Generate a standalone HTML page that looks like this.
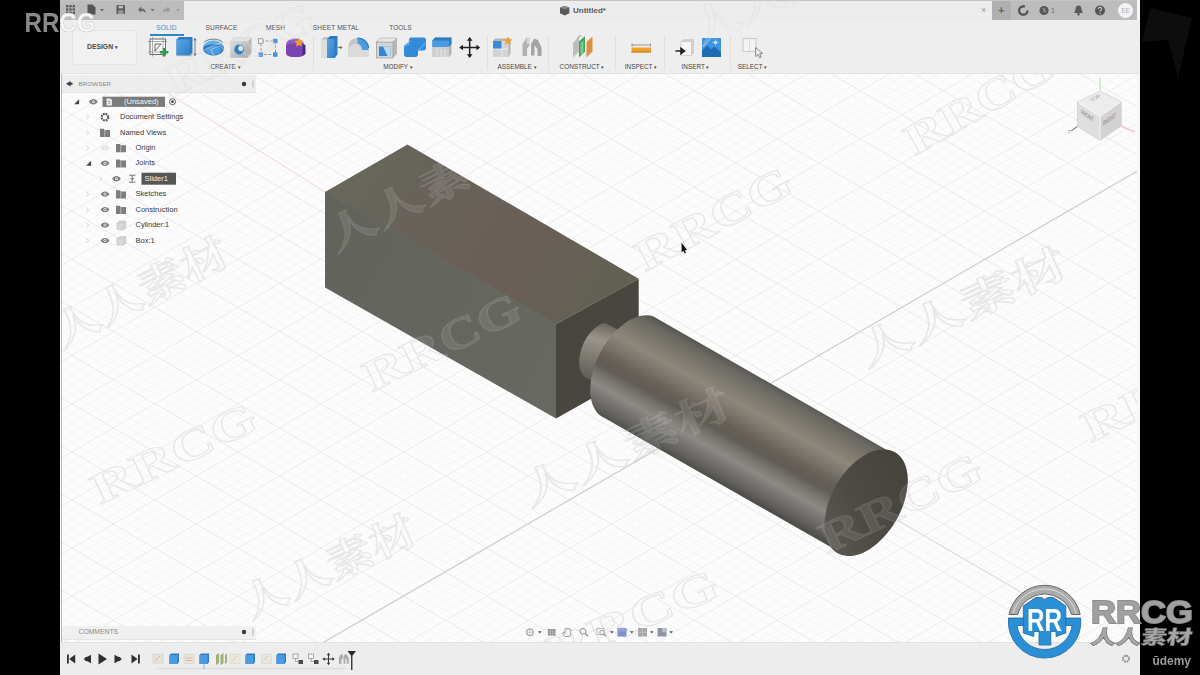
<!DOCTYPE html>
<html lang="en">
<head>
<meta charset="utf-8">
<title>Untitled* - Fusion 360</title>
<style>
html,body{margin:0;padding:0;}
body{width:1200px;height:675px;overflow:hidden;background:#000;position:relative;
  font-family:"Liberation Sans","Noto Sans CJK SC",sans-serif;color:#333;}
.abs{position:absolute;}
#app{position:absolute;left:60px;top:0;width:1080px;height:675px;background:#fbfbfb;overflow:hidden;}
#canvas{position:absolute;left:0;top:0;width:1200px;height:675px;}
/* top bar */
#topbar{position:absolute;left:60px;top:0;width:1080px;height:20px;background:#ececec;}
#topbar .g1{position:absolute;left:0;top:0;width:124px;height:20px;background:#bcbcbc;}
#topbar .g2{position:absolute;left:932px;top:0;width:148px;height:20px;background:#bcbcbc;}
#toolbar{position:absolute;left:60px;top:20px;width:1080px;height:53px;background:#eeeeee;border-bottom:1px solid #e2e2e2;}
.tab{position:absolute;top:24px;font-size:6.6px;letter-spacing:0.1px;color:#555;white-space:nowrap;transform:translateX(-50%);}
.lbl{position:absolute;top:63px;font-size:6.4px;color:#444;white-space:nowrap;transform:translateX(-50%);}
.tiny{font-size:6.6px;white-space:nowrap;color:#444;}
.row{position:absolute;font-size:7.5px;color:#3a3a3a;white-space:nowrap;line-height:10px;}
</style>
</head>
<body>
<div id="app"></div>

<!-- CANVAS -->
<svg id="canvas" width="1200" height="675" viewBox="0 0 1200 675">
  <defs>
    <pattern id="gmin" width="8.3" height="8.3" patternUnits="userSpaceOnUse" patternTransform="matrix(1 0.58 1 -0.58 569 500)">
      <path d="M0 0H8.3M0 0V8.3" stroke="#f0f0f0" stroke-width="0.9" fill="none"/>
    </pattern>
    <pattern id="gmaj" width="41.5" height="41.5" patternUnits="userSpaceOnUse" patternTransform="matrix(1 0.58 1 -0.58 569 500)">
      <path d="M0 0H41.5M0 0V41.5" stroke="#e7e7e7" stroke-width="1.1" fill="none"/>
    </pattern>
    <linearGradient id="cyl" gradientUnits="userSpaceOnUse" x1="770" y1="383" x2="716" y2="480">
      <stop offset="0" stop-color="#5a5852"/>
      <stop offset="0.06" stop-color="#6a6862"/>
      <stop offset="0.16" stop-color="#7a766c"/>
      <stop offset="0.3" stop-color="#8e887b"/>
      <stop offset="0.42" stop-color="#78736a"/>
      <stop offset="0.52" stop-color="#645f57"/>
      <stop offset="0.6" stop-color="#615d56"/>
      <stop offset="0.68" stop-color="#77756f"/>
      <stop offset="0.77" stop-color="#8c8a85"/>
      <stop offset="0.87" stop-color="#72716d"/>
      <stop offset="0.95" stop-color="#605f5b"/>
      <stop offset="1" stop-color="#504e4a"/>
    </linearGradient>
    <linearGradient id="cap" gradientUnits="userSpaceOnUse" x1="895" y1="460" x2="835" y2="545">
      <stop offset="0" stop-color="#46423c"/><stop offset="0.6" stop-color="#4e4a45"/><stop offset="1" stop-color="#5b5853"/>
    </linearGradient>
    <linearGradient id="neck" gradientUnits="userSpaceOnUse" x1="605" y1="323" x2="590" y2="380">
      <stop offset="0" stop-color="#6a665e"/>
      <stop offset="0.3" stop-color="#9a968d"/>
      <stop offset="0.6" stop-color="#7f7b73"/>
      <stop offset="1" stop-color="#5f5c55"/>
    </linearGradient>
    <linearGradient id="topf" gradientUnits="userSpaceOnUse" x1="366" y1="168" x2="597" y2="301">
      <stop offset="0" stop-color="#67675b"/>
      <stop offset="0.25" stop-color="#67625a"/>
      <stop offset="0.55" stop-color="#695f59"/>
      <stop offset="0.8" stop-color="#676056"/>
      <stop offset="1" stop-color="#626053"/>
    </linearGradient>
    <linearGradient id="leftf" gradientUnits="userSpaceOnUse" x1="325" y1="240" x2="556" y2="370">
      <stop offset="0" stop-color="#63635d"/>
      <stop offset="1" stop-color="#676861"/>
    </linearGradient>
  </defs>
  <rect x="60" y="73" width="1080" height="570" fill="#fcfcfc"/>
  <rect x="60" y="73" width="1080" height="570" fill="url(#gmin)"/>
  <rect x="60" y="73" width="1080" height="570" fill="url(#gmaj)"/>
  <!-- faint canvas watermarks -->
  <clipPath id="cpCanvas"><rect x="60" y="73" width="1080" height="570"/></clipPath>
  <g clip-path="url(#cpCanvas)" fill="none" stroke="#e6e6e6" stroke-width="1.1" font-family="'Liberation Serif','Noto Serif CJK SC',serif" font-weight="700">
    <text transform="translate(100 505) rotate(-25.7)" font-size="44" textLength="178" lengthAdjust="spacingAndGlyphs">RRCG</text>
    <text transform="translate(372 392) rotate(-25.8)" font-size="44" textLength="170" lengthAdjust="spacingAndGlyphs">RRCG</text>
    <text transform="translate(645 272) rotate(-28.2)" font-size="44" textLength="171" lengthAdjust="spacingAndGlyphs">RRCG</text>
    <text transform="translate(915 156) rotate(-29.5)" font-size="44" textLength="164" lengthAdjust="spacingAndGlyphs">RRCG</text>
    <text transform="translate(828 554) rotate(-25.7)" font-size="44" textLength="175" lengthAdjust="spacingAndGlyphs">RRCG</text>
    <text transform="translate(1091 443) rotate(-25.8)" font-size="44" textLength="177" lengthAdjust="spacingAndGlyphs">RRCG</text>
    <text transform="translate(555 668) rotate(-23.6)" font-size="44" textLength="182" lengthAdjust="spacingAndGlyphs">RRCG</text>
    <text transform="translate(62 347) rotate(-26.6)" font-size="40" textLength="190" lengthAdjust="spacingAndGlyphs">人人素材</text>
    <text transform="translate(250 619) rotate(-24.9)" font-size="40" textLength="187" lengthAdjust="spacingAndGlyphs">人人素材</text>
    <text transform="translate(529 507) rotate(-24.4)" font-size="40" textLength="225" lengthAdjust="spacingAndGlyphs">人人素材</text>
    <text transform="translate(866 367) rotate(-24.7)" font-size="40" textLength="225" lengthAdjust="spacingAndGlyphs">人人素材</text>
  </g>
  <!-- axis lines -->
  <line x1="60" y1="794.8" x2="1140" y2="169.5" stroke="#cfcfcf" stroke-width="1.2"/>

  <!-- viewcube -->
  <g id="viewcube">
    <path d="M1100 78v12" stroke="#bfe5bf" stroke-width="1.400"/>
    <path d="M1121 126l14 6" stroke="#f5c6cc" stroke-width="1.400"/>
    <path d="M1078 126l-7 5" stroke="#8a8a9a" stroke-width="1.200"/>
    <path d="M1100 140.500l-22.500-14 0-24.500 22.500 14.500z" fill="#dedede"/>
    <path d="M1100 140.500l21-14.500v-24.500l-21 15z" fill="#d2d2d2"/>
    <path d="M1100 91l21.500 10.500-21.500 15-22.500-14.500z" fill="#ececec"/>
    <path d="M1077.500 102l22.500 14.500 21.500-15M1100 116.500v24" stroke="#f6f6f6" stroke-width="1" fill="none"/>
    <path d="M1100 91l21.500 10.500v24.500l-21.500 14.500-22.500-14-0-24.500z" fill="none" stroke="#cfcfcf" stroke-width=".7"/>
    <text transform="matrix(.8 .5 0 1 1081 114)" font-size="7" font-weight="700" fill="#9c9c9c" font-family="'Liberation Sans',sans-serif" textLength="16" lengthAdjust="spacingAndGlyphs">FRONT</text>
    <text transform="matrix(.8 -.55 0 1 1103 126)" font-size="7" font-weight="700" fill="#989898" font-family="'Liberation Sans',sans-serif" textLength="16" lengthAdjust="spacingAndGlyphs">RIGHT</text>
    <text transform="matrix(.8 -.5 .8 .5 1092 102)" font-size="6" font-weight="700" fill="#b5b5b5" font-family="'Liberation Sans',sans-serif">TOP</text>
    <text x="1068" y="133" font-size="5" fill="#8a8a9a" font-family="'Liberation Sans',sans-serif">z</text>
  </g>
  <line x1="61.500" y1="73" x2="61.500" y2="642" stroke="#b9b9b9" stroke-width="1"/>
  <line x1="330" y1="195" x2="150" y2="82" stroke="#f3dada" stroke-width="1.1"/>
  <line x1="885" y1="513" x2="1045" y2="606" stroke="#d9d9d9" stroke-width="1.1"/>
  <!-- cursor -->
  <path d="M681.500 242.500l5.500 7.500-2.300.2 1.300 2.800-1.300.6-1.300-2.800-1.700 1.500z" fill="#111"/>
  <!-- MODEL -->
  <g id="model">
    <!-- box -->
    <polygon points="407.5,144.5 638.7,278.7 556,324 325,192" fill="url(#topf)"/>
    <polygon points="325,192 556,324 556,418.5 325,287.5" fill="url(#leftf)"/>
    <polygon points="556,324 638.7,278.7 638.7,372 556,418.5" fill="#49453f"/>
    <polyline points="325,192 556,324" fill="none" stroke="#4a4842" stroke-width="0.7" opacity=".7"/>
    
    <!-- neck -->
    <path d="M605,323 L640,341 L628,397 L593,379 A16.5,28.5 24 0 1 605,323 Z" fill="url(#neck)"/>
    <!-- cylinder body -->
    <path d="M653.5,316.5 L886,449.5 A34.7,58 29.5 0 1 846.5,556 L605.5,418.5 A30,51.5 28 0 1 653.5,316.5 Z" fill="url(#cyl)"/>
    <!-- end cap -->
    <ellipse cx="866" cy="502.7" rx="34.7" ry="58" transform="rotate(29.5 866 502.7)" fill="url(#cap)"/>
  </g>
  <!-- watermark traces over model -->
  <clipPath id="cpModel"><polygon points="407.5,144.5 638.7,278.7 638.7,372 556,418.5 325,287.5 325,192"/><path d="M653.5,316.5 L886,449.5 A34.7,58 29.5 0 1 846.5,556 L605.5,418.5 A30,51.5 28 0 1 653.5,316.5 Z"/></clipPath>
  <g clip-path="url(#cpModel)" fill="rgba(255,255,255,.09)" stroke="rgba(255,255,255,.1)" stroke-width="1.2" font-family="'Liberation Serif','Noto Serif CJK SC',serif" font-weight="700">
    <text transform="translate(372 392) rotate(-25.8)" font-size="44" textLength="170" lengthAdjust="spacingAndGlyphs">RRCG</text>
    <text transform="translate(828 554) rotate(-25.7)" font-size="44" textLength="175" lengthAdjust="spacingAndGlyphs">RRCG</text>
    <text transform="translate(529 507) rotate(-24.4)" font-size="40" textLength="225" lengthAdjust="spacingAndGlyphs">人人素材</text>
    <text transform="translate(335 252) rotate(-26.4)" font-size="40" textLength="207" lengthAdjust="spacingAndGlyphs">人人素材</text>
  </g>

</svg>


<!-- TOP BAR -->
<div class="abs" style="left:1137px;top:0;width:3px;height:675px;background:#f7f7f7;"></div>
<div id="topbar">
  <div class="g1"></div><div class="g2"></div>
  <div class="abs" style="left:932px;top:0;width:19px;height:20px;background:#b0b0b0;"></div>
  <div class="abs" style="left:0;top:0;width:1080px;height:1px;background:#c4c4c4;"></div>
  <div class="abs" style="left:1077px;top:0;width:3px;height:20px;background:#f4f4f4;"></div>
  <div class="abs" style="left:513px;top:6px;font-size:8px;font-weight:700;color:#5a5a5a;line-height:10px;white-space:nowrap;">Untitled*</div>
  <div class="abs" style="left:921px;top:5px;font-size:9px;color:#9a9a9a;line-height:10px;">×</div>
  <div class="abs" style="left:938px;top:4px;font-size:11px;color:#666;line-height:12px;font-weight:700;">+</div>
  <div class="abs" style="left:991px;top:6px;font-size:7px;color:#666;line-height:9px;">1</div>
  <div class="abs" style="left:1058px;top:3px;width:15px;height:15px;border-radius:50%;background:#f3f3f3;font-size:6.5px;line-height:15px;text-align:center;color:#aaa;">EE</div>
</div>
<svg class="abs" style="left:0;top:0;" width="1200" height="20" viewBox="0 0 1200 20">
  <!-- grid icon -->
  <g fill="#5c5c5c">
    <rect x="66" y="5" width="2.4" height="2.4"/><rect x="69.3" y="5" width="2.4" height="2.4"/><rect x="72.6" y="5" width="2.4" height="2.4"/>
    <rect x="66" y="8.3" width="2.4" height="2.4"/><rect x="69.3" y="8.3" width="2.4" height="2.4"/><rect x="72.6" y="8.3" width="2.4" height="2.4"/>
    <rect x="66" y="11.6" width="2.4" height="2.4"/><rect x="69.3" y="11.6" width="2.4" height="2.4"/><rect x="72.6" y="11.6" width="2.4" height="2.4"/>
  </g>
  <!-- file icon -->
  <path d="M87.5 4.5h5l3 3v7h-8z" fill="#555"/>
  <path d="M100 9h4l-2 2.5z" fill="#666"/>
  <!-- save icon -->
  <rect x="116.5" y="5" width="8.5" height="9" rx="1" fill="#5a5a5a"/>
  <rect x="118.5" y="5.8" width="4.5" height="2.6" fill="#bcbcbc"/><rect x="118.3" y="10.3" width="5" height="3.7" fill="#9a9a9a"/>
  <!-- undo -->
  <path d="M138 9.5l3.2-3v2c3 0 4.6 1.8 4.8 4.8-1-1.7-2.4-2.3-4.8-2.3v2z" fill="#6a6a6a"/>
  <path d="M150.5 9h4l-2 2.5z" fill="#777"/>
  <!-- redo -->
  <path d="M170.5 9.5l-3.2-3v2c-3 0-4.6 1.8-4.8 4.8 1-1.7 2.4-2.3 4.8-2.3v2z" fill="#9a9a9a"/>
  <path d="M176 9h4l-2 2.5z" fill="#999"/>
  <!-- title cube -->
  <path d="M560 7.5l4.7-1.5 4.7 1.5v5.8l-4.7 2.2-4.7-2.2z" fill="#5a5a5a"/>
  <path d="M560 7.5l4.7 1.7 4.7-1.7-4.7-1.5z" fill="#8a8a8a"/>
  <!-- refresh -->
  <circle cx="1023.3" cy="10.5" r="4.2" fill="none" stroke="#4e4e4e" stroke-width="2.2" stroke-dasharray="21 5.4"/>
  <!-- clock -->
  <circle cx="1044" cy="10.5" r="4.6" fill="#5a5a5a"/>
  <path d="M1044 8v2.8l2 1" stroke="#bcbcbc" stroke-width="1" fill="none"/>
  <!-- bell -->
  <path d="M1078.5 5.5c2.2 0 3 2 3 4l1.3 3.5h-8.6l1.3-3.5c0-2 .8-4 3-4z" fill="#5a5a5a"/><circle cx="1078.5" cy="14.3" r="1.2" fill="#5a5a5a"/>
  <!-- help -->
  <circle cx="1100" cy="10.5" r="5" fill="#555"/>
  <path d="M1098.3 9c0-2.2 3.4-2.2 3.4 0 0 1.2-1.7 1.3-1.7 2.8" stroke="#c8c8c8" stroke-width="1.1" fill="none"/><circle cx="1100" cy="13.4" r=".7" fill="#c8c8c8"/>
</svg>

<!-- TOOLBAR -->
<div id="toolbar">
  <div class="abs" style="left:12px;top:10px;width:63px;height:33px;background:#f1f1f1;border:1px solid #e6e6e6;border-radius:2px;"></div>
  <div class="abs" style="left:27px;top:22px;font-size:6.8px;font-weight:700;color:#4a4a4a;line-height:9px;white-space:nowrap;">DESIGN <span style="font-size:5px;">▾</span></div>
  <div class="abs" style="left:90px;top:13.5px;width:34px;height:2px;background:#2f86c6;"></div>
</div>
<div class="tab" style="left:166.5px;color:#3a8ecb;">SOLID</div>
<div class="tab" style="left:221.5px;">SURFACE</div>
<div class="tab" style="left:275.5px;">MESH</div>
<div class="tab" style="left:336px;">SHEET METAL</div>
<div class="tab" style="left:400.5px;">TOOLS</div>
<div class="lbl" style="left:225.5px;">CREATE <span style="font-size:4.5px;">▾</span></div>
<div class="lbl" style="left:398px;">MODIFY <span style="font-size:4.5px;">▾</span></div>
<div class="lbl" style="left:517px;">ASSEMBLE <span style="font-size:4.5px;">▾</span></div>
<div class="lbl" style="left:582px;">CONSTRUCT <span style="font-size:4.5px;">▾</span></div>
<div class="lbl" style="left:641px;">INSPECT <span style="font-size:4.5px;">▾</span></div>
<div class="lbl" style="left:695.5px;">INSERT <span style="font-size:4.5px;">▾</span></div>
<div class="lbl" style="left:752.5px;">SELECT <span style="font-size:4.5px;">▾</span></div>


<svg class="abs" style="left:0;top:20px;" width="1200" height="55" viewBox="0 20 1200 55">
  <defs>
    <linearGradient id="bl" x1="0" y1="0" x2="1" y2="1"><stop offset="0" stop-color="#5aa8e6"/><stop offset="1" stop-color="#2f7fc8"/></linearGradient>
    <linearGradient id="gr" x1="0" y1="0" x2="1" y2="1"><stop offset="0" stop-color="#dcdcdc"/><stop offset="1" stop-color="#a9a9a9"/></linearGradient>
  </defs>
  <!-- dividers -->
  <g stroke="#e0e0e0" stroke-width="1">
    <line x1="313.5" y1="36" x2="313.5" y2="70"/><line x1="487.5" y1="36" x2="487.5" y2="70"/><line x1="548.5" y1="36" x2="548.5" y2="70"/>
    <line x1="615.5" y1="36" x2="615.5" y2="70"/><line x1="664.5" y1="36" x2="664.5" y2="70"/><line x1="730.5" y1="36" x2="730.5" y2="70"/>
  </g>
  <!-- 1 create sketch -->
  <rect x="150" y="39" width="15.5" height="15.5" fill="#f8f8f8" stroke="#6a6a6a" stroke-width="1"/>
  <path d="M148 41.5h19M148 52h19M152.5 37v19.5M163 37v19.5" stroke="#8a8a8a" stroke-width=".7"/>
  <path d="M155 51v-7h6z" fill="none" stroke="#555" stroke-width=".9"/>
  <path d="M160 52.2h8.4M164.2 48v8.4" stroke="#2c9a4b" stroke-width="2.6"/>
  <!-- 2 box -->
  <path d="M176.5 39.5l2.5-2.5h13.5v15.5l-2.5 3h-13.5z" fill="#2e7bc2"/>
  <rect x="176.500" y="39.500" width="13.5" height="16" fill="url(#bl)"/>
  <path d="M176.5 55.500h13.5l2.5-3v3.800h-16z" fill="#b9b9b9"/>
  <path d="M195 38.500v17M193.700 40.500l1.300-2 1.300 2M193.700 53.500l1.300 2 1.300-2" stroke="#555" stroke-width=".8" fill="none"/>
  <!-- 3 dish -->
  <ellipse cx="213.500" cy="48.500" rx="10.500" ry="7.200" fill="#2c78be"/>
  <path d="M203 48c1-10 20-10 21 0-3-5-18-5-21 0z" fill="#62b0ea"/>
  <ellipse cx="213.500" cy="50.500" rx="8" ry="4.200" fill="#4a9be0"/>
  <path d="M204 42.500c4-4.500 15-4.500 19 0" stroke="#555" stroke-width=".8" fill="none"/>
  <!-- 4 hole cube -->
  <path d="M230.500 41.500l3.500-4h17.500v15.500l-3.500 4.500h-17.500z" fill="#b5b5b5"/>
  <rect x="230.500" y="41.500" width="17.500" height="16" fill="url(#gr)"/>
  <path d="M230.500 41.500l3.500-4h17.500l-3.500 4z" fill="#e3e3e3"/>
  <circle cx="239.300" cy="49.500" r="5" fill="#2f7fc8"/><circle cx="240.800" cy="48.300" r="2.600" fill="#d5e7f7"/>
  <!-- 5 pattern -->
  <rect x="261" y="41" width="14.500" height="13.500" fill="none" stroke="#8a8a8a" stroke-width=".9" stroke-dasharray="3 1.600"/>
  <rect x="258.500" y="38.800" width="4.500" height="4.500" fill="#f4f4f4" stroke="#8a8a8a" stroke-width=".8"/>
  <rect x="273" y="38.800" width="4.500" height="4.500" fill="#4a8fd8"/>
  <rect x="258.500" y="52.300" width="4.500" height="4.500" fill="#4a8fd8"/>
  <rect x="273" y="52.300" width="4.500" height="4.500" fill="#4a8fd8"/>
  <!-- 6 purple form -->
  <path d="M286 45c0-4 4-6.500 8.500-6.500s8.500 2 9.500 5.500l1 8.500c0 3-3 4.500-9.500 4.500s-9.500-1.500-9.500-4.500z" fill="#8f59c4"/>
  <path d="M286 46c3-3 14-3 18.500-1l.5 7.500c0 3-3 4.500-9.500 4.500s-9.500-1.500-9.500-4.500z" fill="#7a45b2"/>
  <path d="M299 37.500l1.500 3 3.300.400-2.400 2.300.6 3.300-3-1.600-3 1.600.6-3.300-2.400-2.300 3.300-.400z" fill="#f0a030"/>
  <path d="M302.500 44l3 1v9l-3 1.500z" fill="#4a2a80"/>
  <!-- 7 press pull -->
  <path d="M321 39.500l3-2.500h6v18l-3 3h-6z" fill="#c2c2c2"/>
  <rect x="321" y="39.500" width="6" height="18.500" fill="#dedede"/>
  <path d="M327 39l3-3h7.500v18.500l-3 3.500h-7.500z" fill="#2e7bc2"/>
  <rect x="327" y="39" width="7.500" height="19" fill="url(#bl)"/>
  <path d="M338 47.500h3.500M340.300 46l1.500 1.500-1.500 1.500" stroke="#444" stroke-width=".8" fill="none"/>
  <!-- 8 fillet -->
  <path d="M348.500 57v-11c0-5 4.500-8 9-8 6 0 11 4.500 11 10v9z" fill="#c4c4c4"/>
  <path d="M348.500 57v-9c2-3 5-4.500 9-4.500l4.500 5.500h6.500v8z" fill="#dadada"/>
  <path d="M357.500 38c6 0 11 4.500 11 10v2h-6.500c0-4-2-6-4.500-6.500z" fill="#4a9be0"/>
  <path d="M357.500 38c6 0 11 4.500 11 10" stroke="#2e7bc2" stroke-width="1.200" fill="none"/>
  <!-- 9 shell -->
  <path d="M376.500 42l4-4h16.500v15.500l-4 4.500h-16.500z" fill="#b7b7b7"/>
  <rect x="376.500" y="42" width="16.500" height="16" fill="#d5d5d5" stroke="#9a9a9a" stroke-width=".7"/>
  <path d="M376.500 42l4-4h16.500l-4 4z" fill="#e6e6e6" stroke="#9a9a9a" stroke-width=".5"/>
  <rect x="379" y="46.500" width="11.500" height="9.500" fill="#3586d2"/>
  <path d="M383 46.500h7.500v9.500h-3z" fill="#bcd9f2"/>
  <!-- 10 combine -->
  <path d="M411 37.500h12.500c1.500 0 2.500 1 2.500 2.500v8c0 1.500-1 2.500-2.500 2.500h-5.500v4c0 1.500-1 2.500-2.500 2.500h-9c-1.500 0-2.500-1-2.500-2.500v-7.500c0-1.500 1-2.500 2.500-2.500h2.500v-4.500c0-1.500 1-2.500 2-2.500z" fill="#338ad8"/>
  <path d="M404 47l7-6.500M418 50.500l8-8" stroke="#5aa8e6" stroke-width="1.500"/>
  <!-- 11 offset face -->
  <path d="M432.500 40.500l2.500-3h16.500v16.500l-2.500 3h-16.500z" fill="#b5b5b5"/>
  <rect x="432.500" y="47" width="16.500" height="10" fill="#cfcfcf"/>
  <path d="M432.500 40.500l2.500-3h16.500v6.500l-2.500 3h-16.500z" fill="#2e7bc2"/>
  <rect x="432.500" y="40.500" width="16.500" height="6.500" fill="#4a9be0"/>
  <path d="M437 49v8M441 49v8M445 49v8" stroke="#e8e8e8" stroke-width="1"/>
  <!-- 12 move -->
  <path d="M469.700 38.500v18M460.700 47.500h18" stroke="#222" stroke-width="1.500"/>
  <path d="M469.700 37l2.800 3.800h-5.600zM469.700 58l2.800-3.800h-5.600zM459.200 47.500l3.800-2.800v5.600zM480.200 47.500l-3.800-2.800v5.600z" fill="#222"/>
  <!-- 13 new component -->
  <path d="M493 41l2-2.500h15.500v15l-2 3.500h-15.500z" fill="#b5b5b5"/>
  <rect x="493" y="41" width="15.500" height="16" fill="#d2d2d2"/>
  <rect x="493" y="41" width="9" height="8" fill="#3a8bd6"/>
  <path d="M493 49h15.500M502 41v16" stroke="#f2f2f2" stroke-width=".8"/>
  <path d="M508 36.500l1.300 2.700 3 .4-2.200 2 .6 3-2.700-1.500-2.700 1.500.6-3-2.200-2 3-.4z" fill="#f0a030"/>
  <!-- 14 joint -->
  <path d="M522.500 56v-12l4-6.500 3.500 1v6l-3 4.500v7z" fill="#b2b2b2"/>
  <path d="M531 44.500l3-6 4 1.500 3.500 7.500v8.500h-4v-7l-3-3.500v10h-3.500z" fill="#a4a4a4"/>
  <path d="M526.500 37.500l3.500 1v6l-3.500-1z" fill="#d6d6d6"/>
  <!-- 15 construct -->
  <path d="M573 43l6-6.500v15l-6 6z" fill="#bdbdbd"/>
  <path d="M579 41.500l6-5.500v15.500l-6 6z" fill="#3fa35a"/>
  <path d="M580.500 43l3-2.800v12l-3 3z" fill="#7ec792"/>
  <path d="M586.500 42l6-5.500v15l-6 6z" fill="#e0913f"/>
  <path d="M577 38.500c1-2 3-3 4.500-2.500" stroke="#9a9a9a" stroke-width="1" fill="none"/>
  <!-- 16 inspect -->
  <rect x="631.500" y="47.500" width="19.500" height="4.800" fill="#eda12d"/>
  <rect x="631.500" y="51" width="19.500" height="1.600" fill="#d28a20"/>
  <path d="M632 45h18.500M632 43.500v3M650.500 43.500v3" stroke="#8a8a8a" stroke-width=".9"/>
  <!-- 17 insert -->
  <path d="M681 41.500l2.500-2.500h10.500v13.500l-2.500 3h-10.500z" fill="#d0d0d0"/>
  <rect x="681" y="41.500" width="10.500" height="14" fill="#f6f6f6" stroke="#bdbdbd" stroke-width=".6"/>
  <path d="M675.500 51h6M681 48.300l3.500 2.700-3.500 2.700z" stroke="#222" stroke-width="1.600" fill="#222"/>
  <!-- 18 image -->
  <rect x="702" y="38" width="19" height="19" fill="#3d95e0"/>
  <path d="M702 57v-6l5-5.500 4 4 3.500-3 6.500 6v4.500z" fill="#1f6cb5"/>
  <circle cx="715.500" cy="42.500" r="1.700" fill="#d8ecfb"/>
  <path d="M715.500 39v7M712 42.500h7" stroke="#a9d3f5" stroke-width=".6"/>
  <!-- 19 select -->
  <rect x="743" y="38.500" width="13" height="13" fill="#f3f3f3" stroke="#c4c4c4" stroke-width=".9"/>
  <path d="M749.500 38.500v13" stroke="#d4d4d4" stroke-width=".8"/>
  <path d="M755.500 47.500l.3 9 2.200-2 1.600 3.300 1.600-.8-1.600-3.200 3-.3z" fill="#f4f4f4" stroke="#6a6a6a" stroke-width=".8"/>
</svg>


<!-- BROWSER -->
<div class="abs" style="left:62px;top:75px;width:194px;height:16.500px;background:#ededed;border-bottom:1px solid #e3e3e3;"></div>
<div class="abs tiny" style="left:78.500px;top:79.500px;font-size:6.200px;line-height:8px;color:#8a8a8a;letter-spacing:.1px;">BROWSER</div>
<svg class="abs" style="left:0;top:70px;" width="400" height="200" viewBox="0 70 400 200">
<path d="M66 83.700l4.500-2.800v5.600z" fill="#3c3c3c"/><path d="M69.500 82.600h3v2.200h-3z" fill="#3c3c3c"/>
<circle cx="244" cy="84" r="2.200" fill="#3a3a3a"/><path d="M253 80.500v7" stroke="#b5b5b5" stroke-width="1"/>
<path d="M79.1 99.2v5h-5z" fill="#444"/>
<path d="M89.0 101.7c2-3.6 6.600-3.600 8.600 0-2 3.600-6.600 3.600-8.600 0z" fill="#7a7a7a"/><circle cx="93.3" cy="101.7" r="1.500" fill="#f4f4f4"/><circle cx="93.3" cy="101.7" r=".800" fill="#7a7a7a"/>
<rect x="102.500" y="96.700" width="62.500" height="10.200" fill="#7b7b7b"/>
<path d="M106.500 98.500h4l1.500 1.500v5.500h-5.500z" fill="#e9e9e9"/><path d="M108 101.500h2.500M108 103.300h2.500" stroke="#7b7b7b" stroke-width=".6"/>
<circle cx="172.500" cy="101.7" r="3" fill="none" stroke="#5a5a5a" stroke-width="1"/><circle cx="172.500" cy="101.7" r="1.400" fill="#4a4a4a"/>
<path d="M86.5 115.0l2.200 2.200-2.200 2.200" stroke="#c8c8c8" stroke-width=".900" fill="none"/>
<circle cx="105" cy="117.2" r="3.300" fill="none" stroke="#5f5f5f" stroke-width="2.200" stroke-dasharray="1.900 .700"/>
<path d="M86.5 130.3l2.200 2.200-2.200 2.200" stroke="#c8c8c8" stroke-width=".900" fill="none"/>
<path d="M100 128.7h3.800l1 1.200h5.200v7h-10z" fill="#7d7d7d"/><path d="M104.8 129.9v7" stroke="#f4f4f4" stroke-width=".5"/>
<path d="M86.5 145.70000000000002l2.200 2.200-2.200 2.200" stroke="#c8c8c8" stroke-width=".900" fill="none"/>
<path d="M100.7 147.9c2-3.6 6.600-3.600 8.600 0-2 3.600-6.600 3.600-8.600 0z" fill="#e2e2e2"/><circle cx="105" cy="147.9" r="1.500" fill="#f4f4f4"/><circle cx="105" cy="147.9" r=".800" fill="#e2e2e2"/>
<path d="M116 144.1h3.800l1 1.200h5.200v7h-10z" fill="#7d7d7d"/><path d="M120.8 145.3v7" stroke="#f4f4f4" stroke-width=".5"/>
<path d="M91.1 160.7v5h-5z" fill="#444"/>
<path d="M100.7 163.2c2-3.6 6.600-3.600 8.600 0-2 3.600-6.600 3.600-8.600 0z" fill="#7a7a7a"/><circle cx="105" cy="163.2" r="1.500" fill="#f4f4f4"/><circle cx="105" cy="163.2" r=".800" fill="#7a7a7a"/>
<path d="M116 159.39999999999998h3.800l1 1.200h5.200v7h-10z" fill="#7d7d7d"/><path d="M120.8 160.6v7" stroke="#f4f4f4" stroke-width=".5"/>
<path d="M99.5 176.5l2.200 2.200-2.200 2.200" stroke="#c8c8c8" stroke-width=".900" fill="none"/>
<path d="M112.2 178.7c2-3.6 6.600-3.600 8.600 0-2 3.600-6.600 3.600-8.600 0z" fill="#7a7a7a"/><circle cx="116.5" cy="178.7" r="1.500" fill="#f4f4f4"/><circle cx="116.5" cy="178.7" r=".800" fill="#7a7a7a"/>
<path d="M129 175.2h6.500M129 182.2h6.500M132.200 175.2v7M130.500 178.7h3.500" stroke="#6a6a6a" stroke-width=".9" fill="none"/>
<rect x="141.500" y="172.700" width="34.500" height="12" fill="#565656"/>
<path d="M86.5 191.9l2.200 2.200-2.200 2.200" stroke="#c8c8c8" stroke-width=".900" fill="none"/>
<path d="M100.7 194.1c2-3.6 6.600-3.600 8.600 0-2 3.600-6.600 3.600-8.600 0z" fill="#7a7a7a"/><circle cx="105" cy="194.1" r="1.500" fill="#f4f4f4"/><circle cx="105" cy="194.1" r=".800" fill="#7a7a7a"/>
<path d="M116 190.29999999999998h3.800l1 1.200h5.200v7h-10z" fill="#7d7d7d"/><path d="M120.8 191.5v7" stroke="#f4f4f4" stroke-width=".5"/>
<path d="M86.5 207.4l2.200 2.200-2.200 2.200" stroke="#c8c8c8" stroke-width=".900" fill="none"/>
<path d="M100.7 209.6c2-3.6 6.600-3.600 8.600 0-2 3.600-6.600 3.600-8.600 0z" fill="#7a7a7a"/><circle cx="105" cy="209.6" r="1.500" fill="#f4f4f4"/><circle cx="105" cy="209.6" r=".800" fill="#7a7a7a"/>
<path d="M116 205.79999999999998h3.800l1 1.200h5.200v7h-10z" fill="#7d7d7d"/><path d="M120.8 207.0v7" stroke="#f4f4f4" stroke-width=".5"/>
<path d="M86.5 222.9l2.200 2.200-2.200 2.200" stroke="#c8c8c8" stroke-width=".900" fill="none"/>
<path d="M100.7 225.1c2-3.6 6.600-3.600 8.600 0-2 3.600-6.600 3.600-8.600 0z" fill="#7a7a7a"/><circle cx="105" cy="225.1" r="1.500" fill="#f4f4f4"/><circle cx="105" cy="225.1" r=".800" fill="#7a7a7a"/>
<path d="M117 223.1l2.500-2h6.500v6.500l-2.500 2h-6.500z" fill="#d9d9d9" stroke="#b9b9b9" stroke-width=".6"/><path d="M117 223.1h6.500v6.500M123.500 223.1l2.500-2" stroke="#b9b9b9" stroke-width=".5" fill="none"/>
<path d="M86.5 238.4l2.200 2.200-2.200 2.200" stroke="#c8c8c8" stroke-width=".900" fill="none"/>
<path d="M100.7 240.6c2-3.6 6.600-3.600 8.600 0-2 3.600-6.600 3.600-8.600 0z" fill="#7a7a7a"/><circle cx="105" cy="240.6" r="1.500" fill="#f4f4f4"/><circle cx="105" cy="240.6" r=".800" fill="#7a7a7a"/>
<path d="M117 238.6l2.500-2h6.500v6.500l-2.500 2h-6.500z" fill="#d9d9d9" stroke="#b9b9b9" stroke-width=".6"/><path d="M117 238.6h6.500v6.500M123.500 238.6l2.500-2" stroke="#b9b9b9" stroke-width=".5" fill="none"/>
</svg>
<div class="row" style="left:124px;top:96.7px;color:#f6f6f6;">(Unsaved)</div>
<div class="row" style="left:120px;top:112.2px;color:#3a3a3a;">Document Settings</div>
<div class="row" style="left:120px;top:127.5px;color:#3a3a3a;">Named Views</div>
<div class="row" style="left:135.5px;top:142.9px;color:#3a3a3a;">Origin</div>
<div class="row" style="left:135.5px;top:158.2px;color:#3a3a3a;">Joints</div>
<div class="row" style="left:144.5px;top:173.7px;color:#f4f4f4;">Slider1</div>
<div class="row" style="left:135.5px;top:189.1px;color:#3a3a3a;">Sketches</div>
<div class="row" style="left:135.5px;top:204.6px;color:#3a3a3a;">Construction</div>
<div class="row" style="left:135.5px;top:220.1px;color:#3a3a3a;">Cylinder:1</div>
<div class="row" style="left:135.5px;top:235.6px;color:#3a3a3a;">Box:1</div>


<!-- BOTTOM BARS -->
<div class="abs" style="left:60px;top:641.500px;width:1080px;height:33.500px;background:#ededed;border-top:1px solid #e2e2e2;"></div>
<div class="abs" style="left:62px;top:625.500px;width:194px;height:13px;background:#f0f0f0;border-bottom:1px solid #e4e4e4;"></div>
<div class="abs tiny" style="left:78.500px;top:628px;font-size:6.800px;line-height:8px;color:#8c8c8c;">COMMENTS</div>
<svg class="abs" style="left:0;top:620px;" width="1200" height="55" viewBox="0 620 1200 55">
  <circle cx="244" cy="632" r="2.200" fill="#3a3a3a"/><path d="M253 628.500v7" stroke="#b5b5b5" stroke-width="1"/>
  <!-- playback -->
  <g fill="#2e2e2e">
    <path d="M67 654.500h1.800v9h-1.800zM75.200 654.500v9l-6-4.500z"/>
    <path d="M91 654.800v8.400l-7.500-4.200z"/><circle cx="87" cy="659" r="2.300"/>
    <path d="M98.500 653.500v11l8.500-5.500z"/>
    <path d="M114.500 654.800v8.400l7.500-4.200z"/><circle cx="118.500" cy="659" r="2.300"/>
    <path d="M138 654.500h1.800v9h-1.800zM131.500 654.500v9l6-4.500z"/>
  </g>
  <!-- timeline -->
  <path d="M156.500 668.500h189" stroke="#dcdcdc" stroke-width="1.400"/>
  <g>
    <rect x="153" y="654" width="10" height="9" fill="#e6e2da" stroke="#cfcac0" stroke-width=".6"/><path d="M155 661l5-5" stroke="#c9b28a" stroke-width=".8"/>
    <path d="M169.500 655l1.500-1.500h8v8.500l-1.500 2h-8z" fill="#2e7bc2"/><rect x="169.500" y="655" width="8" height="9" fill="#4a9be0"/>
    <rect x="184" y="654.500" width="10" height="9" fill="#e9e4dc" stroke="#d6d0c6" stroke-width=".6"/><path d="M185.500 658h7M185.500 660.500h7" stroke="#d2b48a" stroke-width=".8"/>
    <path d="M199.500 655l1.500-1.500h8v8.500l-1.500 2h-8z" fill="#2e7bc2"/><rect x="199.500" y="655" width="8" height="9" fill="#4a9be0"/><path d="M204 664v5" stroke="#7ab2e6" stroke-width="1"/>
    <path d="M216 655l3-2v10l-3 2zM220.500 655l3-2v10l-3 2zM225 655l2-1.500v9l-2 1.500z" fill="#9fb07a"/>
    <rect x="230" y="654.500" width="10" height="9" fill="#ebe7e0" stroke="#d9d4ca" stroke-width=".6"/><path d="M232 661l5-5" stroke="#d6c19a" stroke-width=".8"/>
    <path d="M245.500 655l1.500-1.500h8v8.500l-1.500 2h-8z" fill="#2e7bc2"/><rect x="245.500" y="655" width="8" height="9" fill="#4a9be0"/>
    <rect x="261.500" y="654.500" width="10" height="9" fill="#ebe6df" stroke="#d9d4ca" stroke-width=".6"/><path d="M263 661l5-5" stroke="#e0b58a" stroke-width=".8"/>
    <path d="M276.500 655l1.500-1.500h8v8.500l-1.500 2h-8z" fill="#2e7bc2"/><rect x="276.500" y="655" width="8" height="9" fill="#4a9be0"/>
    <rect x="293" y="654" width="5" height="4.500" fill="#f4f4f4" stroke="#8a8a8a" stroke-width=".7"/><path d="M295.500 658.500v3h3" stroke="#8a8a8a" stroke-width=".7" fill="none"/><rect x="298.500" y="660" width="4.500" height="4" fill="#4a4a4a"/>
    <rect x="308.500" y="654" width="5" height="4.500" fill="#f4f4f4" stroke="#8a8a8a" stroke-width=".7"/><path d="M311 658.500v3h3" stroke="#8a8a8a" stroke-width=".7" fill="none"/><rect x="314" y="660" width="4.500" height="4" fill="#4a4a4a"/>
    <path d="M328.500 654v10M323.500 659h10" stroke="#333" stroke-width="1"/><path d="M328.500 652.800l1.800 2.400h-3.600zM328.500 665.200l1.800-2.400h-3.600zM322.300 659l2.400-1.800v3.600zM334.700 659l-2.400-1.800v3.600z" fill="#333"/>
    <path d="M339 664v-6.500l2-3.500 1.800.5v3.500l-1.500 2.500v3.500zM343.500 657l1.500-3 2 .8 1.800 4v5h-2v-4l-1.500-2v6h-1.800z" fill="#ababab"/>
    <path d="M347.500 651h8.500l-3.500 4.500h-1.500z" fill="#2a2a2a"/><path d="M351.750 654v16" stroke="#2a2a2a" stroke-width="1.300"/>
  </g>
  <!-- nav bar -->
  <g>
    <circle cx="530" cy="632.300" r="3.300" fill="none" stroke="#9a9a9a" stroke-width="1.100"/><path d="M526 632.300h8M530 628.300v8" stroke="#b5b5b5" stroke-width=".7"/>
    <path d="M538 631.300h3.600l-1.800 2.300z" fill="#555"/>
    <rect x="548" y="629" width="7.500" height="6.500" fill="#8a8a8a"/><path d="M548 631.200h7.500M548 633.300h7.500M550.500 629v6.500M553 629v6.500" stroke="#d8d8d8" stroke-width=".5"/>
    <path d="M565 636.500c-1.500-1.500-2.500-3.500-1.800-4.200.7-.6 1.500.3 1.800.9v-4c0-1 1.400-1 1.400 0 0-1.200 1.500-1.200 1.500 0 0-1 1.500-1 1.500.3 0-.8 1.400-.8 1.400.3v3.500c0 1.500-.8 2.500-1.400 3.200z" fill="#f2f2f2" stroke="#7a7a7a" stroke-width=".7"/>
    <circle cx="583" cy="631.300" r="2.900" fill="#f6f6f6" stroke="#8a8a8a" stroke-width=".9"/><path d="M585.200 633.500l2.800 2.800" stroke="#8a8a8a" stroke-width="1.200"/>
    <rect x="597" y="628.500" width="7" height="6" fill="#f6f6f6" stroke="#a5a5a5" stroke-width=".7"/><circle cx="602" cy="632.500" r="2.200" fill="#f6f6f6" stroke="#8a8a8a" stroke-width=".8"/><path d="M603.600 634.100l2.300 2.300" stroke="#8a8a8a" stroke-width="1.100"/>
    <path d="M610 631.300h3.600l-1.800 2.300z" fill="#555"/>
    <rect x="617.500" y="628" width="9" height="8.500" fill="#7f8fc9"/><rect x="617.500" y="628" width="9" height="3.500" fill="#93a2d8"/>
    <path d="M630 631.300h3.600l-1.800 2.300z" fill="#555"/>
    <rect x="638" y="628" width="9" height="8.500" fill="#a7a7a7"/><path d="M638 632.300h9M642.500 628v8.500" stroke="#c9c9c9" stroke-width=".6"/>
    <path d="M650 631.300h3.600l-1.800 2.300z" fill="#555"/>
    <rect x="657.500" y="628" width="9" height="8.500" fill="#8b93a8"/><rect x="662" y="628" width="4.500" height="4.200" fill="#b9bdc9"/>
    <path d="M669.300 631.300h3.600l-1.800 2.300z" fill="#555"/>
  </g>
  <!-- settings gear -->
  <circle cx="1126" cy="658.700" r="3" fill="none" stroke="#8f8f8f" stroke-width="2" stroke-dasharray="1.700 .650"/>
</svg>


<!-- LOGOS / WATERMARKS -->
<svg class="abs" style="left:0;top:0;pointer-events:none;" width="1200" height="675" viewBox="0 0 1200 675">
  <g fill="none" stroke="#dedede" stroke-width="1" font-family="'Liberation Serif','Noto Serif CJK SC',serif" font-weight="700" opacity=".55">
    <text transform="translate(175 96) rotate(-25.4)" font-size="44" textLength="158" lengthAdjust="spacingAndGlyphs">RRCG</text>
    <text transform="translate(700 44) rotate(-25.0)" font-size="40" textLength="199" lengthAdjust="spacingAndGlyphs">人人素材</text>
  </g>
  <!-- top-left watermark -->
  <text x="24.500" y="31.900" font-size="28" font-weight="700" textLength="71" lengthAdjust="spacingAndGlyphs" font-family="'Liberation Sans',sans-serif"><tspan fill="#8a8a8a">RR</tspan><tspan fill="#f7f7f7" stroke="#cfcfcf" stroke-width=".6">CG</tspan></text>
  <!-- right-top shadow watermark on black -->
  <path d="M1150 8l42 10-14 60-10-38-26 2z" fill="#0d0d0d"/>
  <!-- logo -->
  <g>
    <path d="M1009 614.500A36.300 36.300 0 0 1 1080.200 614.500H1071.450A27.800 27.800 0 0 0 1017.750 614.500z" fill="#ababab" stroke="#666" stroke-width="1"/>
    <path d="M1013.100 613.500A32.500 32.500 0 0 1 1076.100 613.500" fill="none" stroke="#e9e9e9" stroke-width=".8"/>
    <path d="M1008.500 618H1024.500V625.500H1017.060A27.800 27.800 0 0 0 1072.140 625.500H1064.700V618H1080.700A36.300 36.300 0 1 1 1008.500 618z" fill="#2b8fd6" stroke="#1a67a6" stroke-width=".8"/>
    <path d="M1023.300 606l12.500-8.500h5.800l3 2 3-2h5.900l12.300 8.500v27l-9.800 3.500v-5h-5.200v13.500h-11.800v-13.500h-5.200v5l-10.500-3.500z" fill="#2b8fd6" stroke="#1a67a6" stroke-width=".8"/>
    <text x="1044.600" y="630.500" font-size="31" font-weight="700" fill="#fff" text-anchor="middle" textLength="35" lengthAdjust="spacingAndGlyphs" font-family="'Liberation Sans',sans-serif">RR</text>
  </g>
  <text x="1091" y="622.500" font-size="31.500" font-weight="700" fill="#a0a0a0" stroke="#8c8c8c" stroke-width="1.800" paint-order="stroke" textLength="102" lengthAdjust="spacingAndGlyphs" font-family="'Liberation Sans',sans-serif">RRCG</text>
  <text x="0" y="0" font-size="19" font-weight="900" fill="#a6a6a6" stroke="#6a6a6a" stroke-width=".5" textLength="101" lengthAdjust="spacingAndGlyphs" font-family="'Noto Sans CJK SC','Liberation Sans',sans-serif" transform="translate(1090 643.500) skewX(-10)">人人素材</text>
  <text x="1152.500" y="665" font-size="12" font-weight="700" fill="#9a9a9a" textLength="38.500" lengthAdjust="spacingAndGlyphs" font-family="'Liberation Sans',sans-serif">ūdemy</text>
</svg>


</body>
</html>
